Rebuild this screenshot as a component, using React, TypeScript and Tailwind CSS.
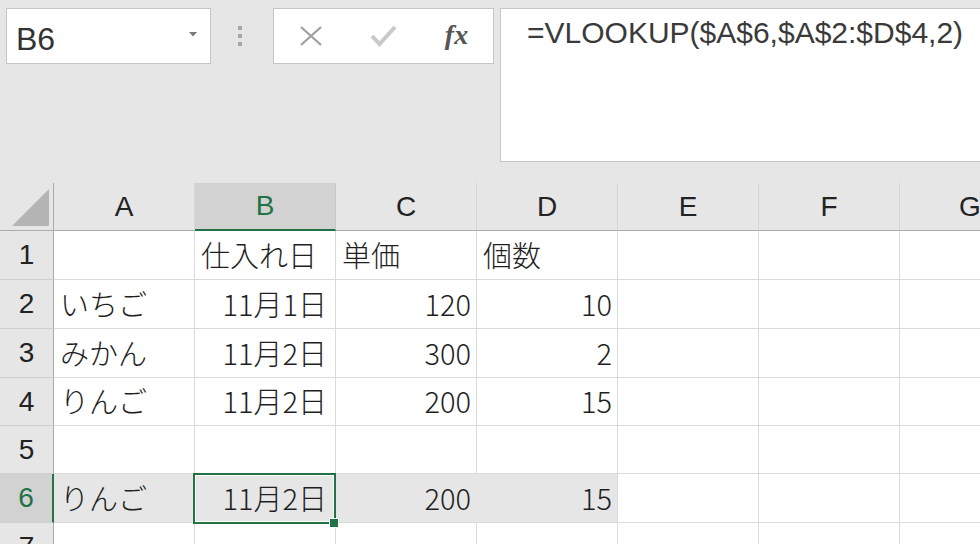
const cols = ["A", "B", "C", "D", "E", "F", "G"];

const data = [
  ["", "仕入れ日", "単価", "個数"],
  ["いちご", "11月1日", "120", "10"],
  ["みかん", "11月2日", "300", "2"],
  ["りんご", "11月2日", "200", "15"],
  ["", "", "", ""],
  ["りんご", "11月2日", "200", "15"],
  ["", "", "", ""],
];

const alignFor = (row: number, col: number) => {
  if (row === 0 || col === 0) return "justify-start pl-[6px]";
  if (col === 1) return "justify-end pr-[8px]";
  return "justify-end pr-[5px]";
};

const App = () => {
  return (
    <div className="w-[980px] h-[544px] overflow-hidden bg-[#e6e6e6] font-['Liberation_Sans',sans-serif]">
      {/* Formula bar */}
      <div className="h-[183px] flex items-start pt-[8px] pl-[6px]">
        <div className="w-[205px] h-[56px] bg-white border border-[#c6c6c6] flex items-start pt-[12px] pl-[9px] pr-[13px]">
          <span className="text-[32px] leading-[36px] text-[#333]">B6</span>
          <svg width="8" height="5" viewBox="0 0 8 5" className="ml-auto mt-[11px]">
            <polygon points="0,0 8,0 4,4.5" fill="#7a7a7a" />
          </svg>
        </div>
        <div className="w-[62px] h-[56px] flex flex-col items-start justify-center gap-[4px] pl-[27px]">
          <span className="w-[4px] h-[4px] bg-[#a6a6a6]" />
          <span className="w-[4px] h-[4px] bg-[#a6a6a6]" />
          <span className="w-[4px] h-[4px] bg-[#a6a6a6]" />
        </div>
        <div className="w-[221px] h-[56px] bg-white border border-[#c6c6c6] grid grid-cols-3 items-center">
          <div className="flex justify-center">
            <svg width="24" height="20" viewBox="0 0 24 20">
              <path d="M2 1 L22 19 M22 1 L2 19" stroke="#9e9e9e" strokeWidth="2.2" fill="none" />
            </svg>
          </div>
          <div className="flex justify-center">
            <svg width="27" height="22" viewBox="0 0 27 22">
              <polyline points="2,11 9.5,19 25,2" stroke="#c9c9c9" strokeWidth="4" fill="none" />
            </svg>
          </div>
          <div className="flex justify-center">
            <span className="text-[28px] leading-none italic font-bold font-['Liberation_Serif',serif] text-[#555] -mt-[2px]">
              fx
            </span>
          </div>
        </div>
        <div className="flex-1 ml-[6px] h-[154px] bg-white border border-r-0 border-[#c6c6c6] pt-[6px] pl-[26px]">
          <span className="text-[30px] leading-[36px] text-[#3a3a3a]">
            =VLOOKUP($A$6,$A$2:$D$4,2)
          </span>
        </div>
      </div>

      {/* Sheet */}
      <div className="grid grid-cols-[54px_repeat(7,141px)] grid-rows-[48px_49px_49px_49px_48px_48px_49px_49px] w-max">
        {/* corner */}
        <div className="border-r border-b border-[#ababab] flex items-end justify-end pr-[4px] pb-[4px]">
          <svg width="37" height="37" viewBox="0 0 37 37">
            <polygon points="0,37 37,37 37,0" fill="#b4b4b4" />
          </svg>
        </div>
        {cols.map((c) =>
          c === "B" ? (
            <div
              key={c}
              className="bg-[#d2d2d2] border-r border-r-[#c8c8c8] border-b-2 border-b-[#217346] flex items-center justify-center text-[28px] text-[#217346]"
            >
              {c}
            </div>
          ) : (
            <div
              key={c}
              className="border-r border-r-[#d4d4d4] border-b border-b-[#ababab] flex items-center justify-center text-[28px] text-[#222]"
            >
              {c}
            </div>
          )
        )}

        {data.map((row, r) => {
          const selected = r === 5;
          return [
            <div
              key={`h${r}`}
              className={
                selected
                  ? "bg-[#d2d2d2] border-r-2 border-r-[#217346] border-b border-b-[#d0d0d0] flex items-center justify-center text-[28px] text-[#217346] overflow-hidden"
                  : "border-r border-r-[#ababab] border-b border-b-[#d0d0d0] flex items-center justify-center text-[28px] text-[#222] overflow-hidden"
              }
            >
              {r + 1}
            </div>,
            ...cols.map((c, ci) => {
              const v = row[ci] ?? "";
              const inSel = selected && ci < 4;
              const base =
                "flex items-center text-[29px] leading-none font-light text-[#1f1f1f] font-['Noto_Sans_CJK_JP',sans-serif] border-b border-b-[#dadada] border-r pb-[2px]";
              const border = inSel && ci < 3 ? "border-r-transparent" : "border-r-[#dadada]";
              const bg = inSel ? "bg-[#e6e6e6]" : "bg-white";
              return (
                <div
                  key={`${r}-${c}`}
                  className={`${base} ${border} ${bg} ${alignFor(r, ci)} ${
                    selected && ci === 1 ? "relative" : ""
                  }`}
                >
                  {v}
                  {selected && ci === 1 && (
                    <div className="absolute -left-[2px] -top-[1px] -right-[1px] -bottom-[2px] border-2 border-[#217346] z-10">
                      <div className="absolute inset-0 border border-white" />
                      <div className="absolute -right-[5px] -bottom-[6px] w-[10px] h-[10px] bg-[#217346] border border-white" />
                    </div>
                  )}
                </div>
              );
            }),
          ];
        })}
      </div>
    </div>
  );
};

export default App;
